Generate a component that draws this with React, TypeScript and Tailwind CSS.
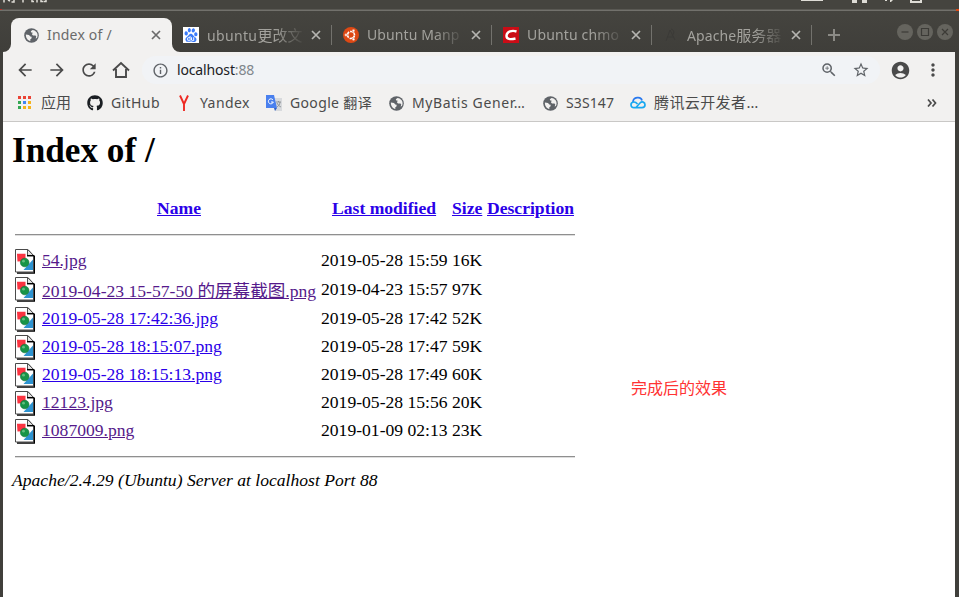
import type { ReactNode } from "react";
import { MdArrowBack, MdArrowForward, MdRefresh, MdOutlineInfo, MdZoomIn, MdStarBorder, MdAccountCircle, MdMoreVert } from "react-icons/md";
import { SiBaidu } from "react-icons/si";
import { FaGithub } from "react-icons/fa";

const ui = "font-['Noto_Sans','Noto_Sans_CJK_SC',sans-serif]";

function Globe() {
  return (
    <svg width="15" height="15" viewBox="0 0 15 15" className="shrink-0">
      <circle cx="7.500" cy="7.500" r="7.300" fill="#5f6368" />
      <path d="M8.500 1.900 6.800 3.200l.5 1.200 1.500.4-.9 1.400 1.100 1.300h2.500l.8 1.200-.7 1.800 1.400-.6c.9-1.600.8-3.700-.2-5.300-.9-1.500-2.400-2.500-4.300-2.700z" fill="#f2f1f0" />
      <path d="M1.900 6.500l3.100.4 1.300 1.500 1.300.4v1.400L6.200 11.500l.2 1.500C3.800 12.600 1.600 9.800 1.900 6.500z" fill="#f2f1f0" />
    </svg>
  );
}

function Close() {
  return (
    <svg width="10" height="10" viewBox="0 0 10 10" stroke="currentColor" strokeWidth="1.700" className="shrink-0">
      <path d="M1 1l8 8M9 1l-8 8" />
    </svg>
  );
}

function Tab({ icon, title, cjk = "", track }: { icon: ReactNode; title: string; cjk?: string; track: string }) {
  return (
    <div className="flex h-[34px] w-[160px] shrink-0 items-center pl-[11px] text-[#a3a29d]">
      <span className="flex size-4 shrink-0 items-center justify-center">{icon}</span>
      <span className={`ml-2 flex h-[22px] w-[98px] items-baseline whitespace-nowrap text-[14px] [mask-image:linear-gradient(to_right,black_68%,transparent_100%)] ${track}`}>
        {title}<span className="text-[15px] tracking-normal">{cjk}</span>
      </span>
      <span className="ml-1.5 flex grow justify-start text-[#b5b4b0]"><Close /></span>
      <span className="h-5 w-px bg-[#73726d]" />
    </div>
  );
}

function Bookmark({ icon, label, width, track = "" }: { icon: ReactNode; label: string; width: string; track?: string }) {
  return (
    <div className={`flex shrink-0 items-center ${width}`}>
      <span className="mr-2 flex size-4 shrink-0 items-center justify-center">{icon}</span>
      <span className={`-mt-0.5 whitespace-nowrap ${track}`}>{label}</span>
    </div>
  );
}

function FileIcon() {
  return (
    <svg width="20" height="25" viewBox="0 0 20 25" className="mt-0.5 shrink-0">
      <path d="M2 24h17.500V7" fill="none" stroke="#000" strokeWidth="1.300" />
      <path d="M.5.500h12.500l5.500 6v16.500H.500z" fill="#fff" stroke="#4a4a4a" />
      <path d="M12.500.500v6h6z" fill="#e4e4e4" stroke="#555" />
      <path d="M12 6.700h7.500" stroke="#000" strokeWidth="1.500" />
      <path d="M2 4.700h8.500v7.500L2.500 12.500z" fill="#fb3340" />
      <path d="M18 10.500V21H8.500z" fill="#2d93d0" />
      <circle cx="9.700" cy="13.500" r="4.300" fill="#179447" stroke="#0d6e35" strokeWidth=".6" />
      <circle cx="8.500" cy="12.200" r="1.400" fill="#62bd80" />
    </svg>
  );
}

const files = [
  { name: "54.jpg", date: "2019-05-28 15:59", size: "16K", visited: true },
  { name: "2019-04-23 15-57-50 的屏幕截图.png", date: "2019-04-23 15:57", size: "97K", visited: true, tall: true },
  { name: "2019-05-28 17:42:36.jpg", date: "2019-05-28 17:42", size: "52K" },
  { name: "2019-05-28 18:15:07.png", date: "2019-05-28 17:47", size: "59K" },
  { name: "2019-05-28 18:15:13.png", date: "2019-05-28 17:49", size: "60K" },
  { name: "12123.jpg", date: "2019-05-28 15:56", size: "20K", visited: true },
  { name: "1087009.png", date: "2019-01-09 02:13", size: "23K", visited: true },
];

function SystemBar() {
  return (
    <div className="flex h-[9px] justify-between overflow-hidden bg-[#45443f]">
      <svg width="60" height="5" viewBox="0 0 60 5" stroke="#dedcd6" strokeWidth="1.500" fill="none">
        <path d="M4 0v2.500M8 0l2 1M14 0v2h-2.500M23 0v2.500M32 0v1.500h2M37 0v2.500M41 0v1.500h2M46 0v1.500h-2.500" />
      </svg>
      <svg width="160" height="4" viewBox="0 0 160 4" fill="#dedcd6">
        <path d="M2 0h22v1H2zM53 0h5v3h-5zM63 0h5v3h-5zM86 0h2v1h-2zM91 0h3l-2 2h-1zM111 0h2v1h8V0h2v3h-12z" />
      </svg>
    </div>
  );
}

export default function App() {
  return (
    <div className={`flex h-[597px] w-[959px] flex-col overflow-hidden bg-[#403f3b] ${ui}`}>
      <SystemBar />
      <div className="flex h-0.5 shrink-0 justify-between border-b border-[#72716c] bg-[#5a5954]">
        <span className="h-px w-0.5 bg-[#b5342c]" />
        <span className="h-0.5 w-[3px] bg-[#dd4814]" />
      </div>

      <div className="flex h-[41px] shrink-0 items-end bg-linear-to-b from-[#45443f] to-[#3f3e3a] pl-[3px]">
        <svg width="8" height="8" viewBox="0 0 8 8" fill="#f2f1f0"><path d="M8 0v8H0a8 8 0 0 0 8-8" /></svg>
        <div className="flex h-[34px] w-[161px] shrink-0 items-center rounded-t-lg bg-[#f2f1f0] pl-[13px] text-[#6b6b6b]">
          <Globe />
          <span className="-mt-0.5 ml-2 w-[104px] text-[14px] tracking-[0.2px]">Index of /</span>
          <Close />
        </div>
        <svg width="8" height="8" viewBox="0 0 8 8" fill="#f2f1f0" className="-mr-[8px] shrink-0"><path d="M0 0v8h8a8 8 0 0 1-8-8" /></svg>
        <Tab track="tracking-[0.35px]" title="ubuntu" cjk="更改文" icon={<span className="flex size-4 items-center justify-center bg-white"><SiBaidu className="size-[14px] text-[#3b7bfa]" /></span>} />
        <Tab track="tracking-[0.1px]" title="Ubuntu Manp" icon={
          <svg width="16" height="16" viewBox="0 0 16 16"><circle cx="8" cy="8" r="8" fill="#dd4814" /><circle cx="8" cy="8" r="3.500" fill="none" stroke="#fff" strokeWidth="1.600" strokeDasharray="6.300 1.030" strokeDashoffset="-.5" /><g fill="#fff" stroke="#dd4814" strokeWidth=".5"><circle cx="3" cy="8" r="1.400" /><circle cx="10.500" cy="3.700" r="1.400" /><circle cx="10.500" cy="12.300" r="1.400" /></g></svg>} />
        <Tab track="tracking-[0.15px]" title="Ubuntu chmo" icon={<svg width="16" height="16" viewBox="0 0 16 16"><path fill="#ca0c16" d="M0 0h16v16H0z" /><path d="M13.500 4.500C9 3 4 4.500 3.500 8.500c-.3 4 4 4.200 9 3" stroke="#fff" strokeWidth="2.400" fill="none" /></svg>} />
        <Tab track="tracking-[0.1px]" title="Apache" cjk="服务器" icon={<svg width="16" height="16" viewBox="0 0 16 16" stroke="#3b3a37" fill="none"><path d="M3 14 7 3l5 10M4 10h7M8 2c4 1 3 5 1 7" /></svg>} />
        <div className="flex h-[34px] grow items-center pl-4">
          <svg width="12" height="12" viewBox="0 0 12 12" stroke="#8b8a85" strokeWidth="2"><path d="M6 0v12M0 6h12" /></svg>
          <div className="mt-[-6px] ml-[57px] flex gap-1">
            {["M4.500 8h7", "M4.500 4.500h7v7h-7z", "M5 5l6 6M11 5l-6 6"].map((d) => (
              <svg key={d} width="16" height="16" viewBox="0 0 16 16" fill="none" stroke="#3c3b37" strokeWidth="1.200"><circle cx="8" cy="8" r="8" fill="#65645e" stroke="none" /><path d={d} /></svg>
            ))}
          </div>
        </div>
      </div>

      <div className="mr-1 ml-[3px] flex grow flex-col bg-[#f2f1f0]">
        <div className="flex h-9 shrink-0 items-center pl-3 text-[#4a4a4a]">
          <MdArrowBack className="size-5" />
          <MdArrowForward className="ml-3 size-5" />
          <MdRefresh className="ml-[12px] size-5" />
          <svg width="18" height="18" viewBox="0 0 18 18" className="ml-[13px]" fill="none" stroke="currentColor" strokeWidth="1.900"><path d="M1 9.500 9 2l8 7.500M4 8v8h10V8" /></svg>
          <div className="ml-3 flex h-7 w-[738px] items-center rounded-full bg-[#f1f3f6] pl-[10px]">
            <MdOutlineInfo className="size-[17px] text-[#5f6368]" />
            <span className="-mt-0.5 ml-2 w-[643px] text-[14px] tracking-[-0.15px] text-[#202124]">localhost<span className="text-[#80868b]">:88</span></span>
            <MdZoomIn className="size-[18px] text-[#5f6368]" />
            <MdStarBorder className="ml-[14px] size-[18px] text-[#5f6368]" />
          </div>
          <MdAccountCircle className="ml-[10px] size-[21px]" />
          <MdMoreVert className="ml-[12px] size-5" />
        </div>

        <div className="flex h-[34px] shrink-0 border-b border-[#c9c8c6] pb-[3px] pl-[14px] text-[14px] text-[#4b4b4b]">
          <Bookmark width="w-[70px]" label="应用" track="text-[15px]" icon={
            <svg width="14" height="14" viewBox="0 0 14 14"><path fill="#ea4335" d="M0 0h3v3H0zM5 0h3v3H5zM10 0h3v3h-3z" /><path fill="#34a853" d="M0 5h3v3H0zM0 10h3v3H0z" /><path fill="#4285f4" d="M5 5h3v3H5z" /><path fill="#f5b31b" d="M10 5h3v3h-3zM5 10h3v3H5zM10 10h3v3h-3z" /></svg>} />
          <Bookmark width="w-[89px]" label="GitHub" track="tracking-[0.4px]" icon={<FaGithub className="size-4 text-[#1b1f23]" />} />
          <Bookmark width="w-[90px]" label="Yandex" track="tracking-[0.4px]" icon={<svg width="16" height="16" viewBox="0 0 16 16" fill="none" stroke="#ee2a23" strokeWidth="1.900"><path d="M4 .5l4 8.500v7M12 .5 8 9" /></svg>} />
          <Bookmark width="w-[122px]" label="Google 翻译" track="tracking-[0.35px]" icon={
            <svg width="16" height="16" viewBox="0 0 16 16"><path fill="#d8dadd" d="M6 3h10v13H9z" /><path fill="#4a80ee" d="M0 0h8l3 13H0z" /><path fill="#2f5fc5" d="M8 13h3l-2 3z" /><path d="M7 5a2.500 2.500 0 1 0 .3 2H5" stroke="#fff" fill="none" /><path d="M10 7h5M12.500 6v1M14 7c0 3-2 4-3 5M11 8c1 2 2 3 4 4" stroke="#80868b" strokeWidth=".8" fill="none" /></svg>} />
          <Bookmark width="w-[154px]" label="MyBatis Gener…" track="tracking-[0.6px]" icon={<Globe />} />
          <Bookmark width="w-[88px]" label="S3S147" track="tracking-[0.1px]" icon={<Globe />} />
          <Bookmark width="w-[294px]" label="腾讯云开发者…" track="text-[15px] tracking-[0.4px]" icon={
            <svg width="16" height="16" viewBox="0 0 16 16" fill="none" strokeWidth="1.700"><path d="M3 7c0-5 8-6 9-1.500" stroke="#2878ee" /><path d="M6 12.500 10 8c2-2 5-1 5 1.800 0 2-1.500 2.900-3 2.900H4c-4 0-4-5.700 0-5.700 1.500 0 2.500.8 3.500 2" stroke="#18a8f0" /></svg>} />
          <svg width="10" height="8" viewBox="0 0 10 8" className="mt-[11px] ml-[3px]" fill="none" stroke="currentColor" strokeWidth="1.700"><path d="M1 .5 4 4 1 7.500M5.500.5l3 3.500-3 3.500" /></svg>
        </div>

        <div className="flex grow bg-white pt-2 pl-[9px] font-['Liberation_Serif','Noto_Sans_CJK_SC',serif] text-[17.6px] leading-[26px] text-black">
          <div className="w-[563px] shrink-0">
            <h1 className="h-[65px] pt-px text-[35.2px] leading-10 font-bold">Index of /</h1>
            <div className="flex h-[39px] font-bold whitespace-nowrap text-[#2a00e8]">
              <a className="ml-[145px] w-[175px] underline">Name</a>
              <a className="w-[120px] underline">Last modified</a>
              <a className="w-[35px] underline">Size</a>
              <a className="underline">Description</a>
            </div>
            <div className="ml-[3px] h-[13px] border-t border-[#8f8f8f]"><div className="h-px bg-[#dedede]" /></div>
            {files.map((f) => (
              <div key={f.name} className={`flex whitespace-nowrap ${f.tall ? "h-[30px] leading-[28px]" : "h-7"}`}>
                <div className="ml-[3px] w-[27px]"><FileIcon /></div>
                <div className={`w-[279px] ${f.tall ? "pt-0.5" : ""} ${f.visited ? "text-[#551a8b]" : "text-[#2a00e8]"}`}><a className="underline">{f.name}</a></div>
                <div className="w-[131px]">{f.date}</div>
                <div>{f.size}</div>
              </div>
            ))}
            <div className="mt-[11px] ml-[3px] h-[11px] border-t border-[#8f8f8f]"><div className="h-px bg-[#dedede]" /></div>
            <address className="italic">Apache/2.4.29 (Ubuntu) Server at localhost Port 88</address>
          </div>
          <p className="mt-[244px] ml-[56px] font-['Noto_Sans_CJK_SC',sans-serif] text-[16px] text-[#ff3333]">完成后的效果</p>
        </div>
      </div>
    </div>
  );
}
